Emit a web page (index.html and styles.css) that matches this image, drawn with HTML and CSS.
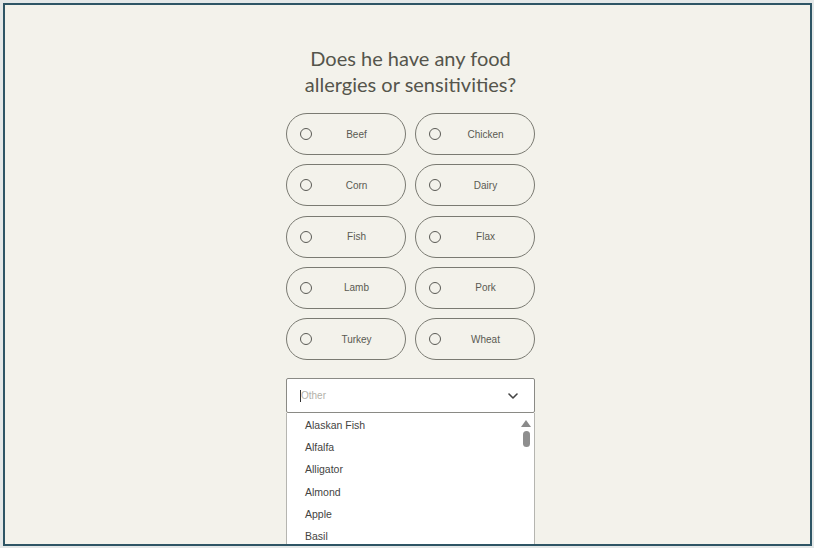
FILE: index.html
```html
<!DOCTYPE html>
<html>
<head>
<meta charset="utf-8">
<link rel="stylesheet" href="styles.css">
</head>
<body>
<div class="frame">
  <div class="content">
    <h1 class="title">Does he have any food<br>allergies or sensitivities?</h1>
    <div class="options">
      <label class="pill"><span class="radio"></span><span class="label">Beef</span></label>
      <label class="pill"><span class="radio"></span><span class="label">Chicken</span></label>
      <label class="pill"><span class="radio"></span><span class="label">Corn</span></label>
      <label class="pill"><span class="radio"></span><span class="label">Dairy</span></label>
      <label class="pill"><span class="radio"></span><span class="label">Fish</span></label>
      <label class="pill"><span class="radio"></span><span class="label">Flax</span></label>
      <label class="pill"><span class="radio"></span><span class="label">Lamb</span></label>
      <label class="pill"><span class="radio"></span><span class="label">Pork</span></label>
      <label class="pill"><span class="radio"></span><span class="label">Turkey</span></label>
      <label class="pill"><span class="radio"></span><span class="label">Wheat</span></label>
    </div>
    <div class="select">
      <div class="select-box">
        <span class="caret"></span><span class="placeholder">Other</span>
        <svg class="chevron" width="10" height="6" viewBox="0 0 10 6"><path d="M1 1 L5 5 L9 1" fill="none" stroke="#444" stroke-width="1.6" stroke-linecap="round" stroke-linejoin="round"/></svg>
      </div>
      <div class="menu">
        <ul class="items">
          <li>Alaskan Fish</li>
          <li>Alfalfa</li>
          <li>Alligator</li>
          <li>Almond</li>
          <li>Apple</li>
          <li>Basil</li>
        </ul>
        <div class="scrollbar">
          <svg class="arrow" width="10" height="7" viewBox="0 0 10 7"><path d="M0 7 L5 0 L10 7 Z" fill="#8a8a8a"/></svg>
          <div class="thumb"></div>
        </div>
      </div>
    </div>
  </div>
</div>
</body>
</html>
```

FILE: styles.css
```css
* { box-sizing: border-box; }
html, body { margin: 0; padding: 0; }
body {
  width: 814px;
  height: 548px;
  background: #e4e8e8;
  padding: 3px 2px 2px 3px;
  overflow: hidden;
  font-family: "Liberation Sans", Arial, sans-serif;
}
.frame {
  width: 809px;
  height: 543px;
  border: 2px solid #2e5565;
  background: #f3f2eb;
  overflow: hidden;
}
.content {
  width: 249px;
  margin-left: 281px;
  padding-top: 40px;
  display: flex;
  flex-direction: column;
}
.title {
  margin: 0 -40px;
  font-family: Lato, "Noto Sans", sans-serif;
  font-weight: 400;
  font-size: 20px;
  line-height: 26px;
  color: #55554c;
  text-align: center;
}
.options {
  margin-top: 16px;
  display: grid;
  grid-template-columns: 120px 120px;
  grid-auto-rows: 42px;
  column-gap: 9px;
  row-gap: 9.25px;
}
.pill {
  display: flex;
  align-items: center;
  border: 1px solid #7a7a72;
  border-radius: 21px;
  padding-left: 13px;
}
.radio {
  width: 12px;
  height: 12px;
  border: 1.3px solid #5a5a55;
  border-radius: 50%;
  flex: none;
}
.label {
  flex: 1;
  text-align: center;
  font-size: 10px;
  color: #5a5a52;
  padding-right: 4px;
}
.select {
  margin-top: 18px;
}
.select-box {
  height: 35px;
  border: 1px solid #8a8a85;
  border-radius: 2px;
  background: #ffffff;
  display: flex;
  align-items: center;
  padding-left: 13px;
  padding-right: 16px;
}
.caret {
  width: 1px;
  height: 12px;
  background: #333;
}
.placeholder {
  flex: 1;
  font-size: 10px;
  color: #b3b1a8;
}
.menu {
  display: flex;
  background: #ffffff;
  border-left: 1px solid #b5b5b0;
  border-right: 1px solid #b5b5b0;
  height: 160px;
}
.items {
  list-style: none;
  margin: 0;
  padding: 1px 0 0 18px;
  flex: 1;
}
.items li {
  font-size: 10.5px;
  line-height: 22.2px;
  color: #44443f;
}
.scrollbar {
  width: 14px;
  display: flex;
  flex-direction: column;
  align-items: center;
  padding-top: 7px;
  margin-right: 1px;
}
.thumb {
  margin-top: 4px;
  width: 7px;
  height: 16px;
  border-radius: 4px;
  background: #8e8e8e;
}
```
